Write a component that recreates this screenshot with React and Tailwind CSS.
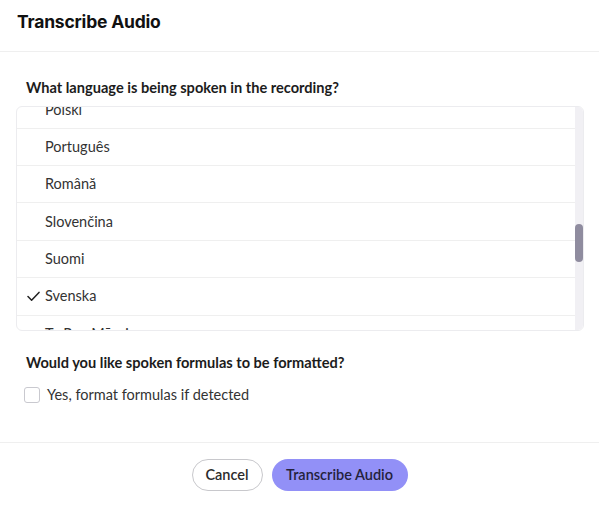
import { useState } from 'react'

const languages = [
  'Bahasa Indonesia', 'Bahasa Melayu', 'Català', 'Čeština', 'Dansk', 'Deutsch', 'English', 'Español',
  'Français', 'Hrvatski', 'Italiano', 'Latviešu', 'Lietuvių', 'Magyar', 'Nederlands', 'Norsk',
  'Polski', 'Português', 'Română', 'Slovenčina', 'Suomi', 'Svenska', 'Te Reo Māori', 'Tiếng Việt',
  'Türkçe', 'Ελληνικά', 'Български', 'Русский', 'Српски', 'Українська', 'עברית', 'العربية',
]

const ROW = 37.4
const START = languages.indexOf('Polski')

export default function App() {
  const [selected, setSelected] = useState('Svenska')
  const [formulas, setFormulas] = useState(false)

  const visible = languages.slice(START, START + 7)

  return (
    <div className="w-[599px] h-[505px] bg-white flex flex-col text-[#2b2b2b]" style={{ fontFamily: 'Lato, "Open Sans", sans-serif' }}>
      {/* Header */}
      <div className="h-[52px] border-b border-[#efefef] flex items-center px-[17px] pb-[7px] shrink-0">
        <h1 className="text-[17.5px] font-bold tracking-[-0.2px] text-[#111]" style={{ fontFamily: 'Inter, sans-serif' }}>
          Transcribe Audio
        </h1>
      </div>

      {/* Body */}
      <div className="flex-1 flex flex-col">
        <p className="pl-[26px] pt-[27px] text-[14.6px] font-bold text-[#1c1c1c] leading-[18px]">
          What language is being spoken in the recording?
        </p>

        <div className="ml-[16px] mr-[15px] mt-[9px] h-[225px] border border-[#ececef] rounded-[6px] flex overflow-hidden">
          <div className="flex-1 overflow-hidden">
            <div className="-mt-[15.8px]">
              {visible.map((lang) => (
                <button
                  key={lang}
                  onClick={() => setSelected(lang)}
                  className="w-full flex items-center pl-[10px] border-b border-[#efefef] text-left text-[14.5px] text-[#333]"
                  style={{ height: ROW }}>
                  <span className="w-[18px] shrink-0 flex items-center">
                    {selected === lang && (
                      <svg width="13" height="11" viewBox="0 0 13 11" fill="none">
                        <path d="M1 5.6 L4.6 9.3 L12 1.4" stroke="#222" strokeWidth="1.5" strokeLinecap="round" strokeLinejoin="round" />
                      </svg>
                    )}
                  </span>
                  {lang}
                </button>
              ))}
            </div>
          </div>
          {/* Scrollbar */}
          <div className="w-[8px] bg-[#f1f0f4] shrink-0">
            <div className="mt-[117px] h-[38px] rounded-full bg-[#8f8c9f]" />
          </div>
        </div>

        <p className="pl-[26px] pt-[23px] text-[14.6px] font-bold text-[#1c1c1c] leading-[18px]">
          Would you like spoken formulas to be formatted?
        </p>

        <label className="flex items-center pl-[24px] mt-[12px] gap-[7px] cursor-pointer">
          <span
            onClick={() => setFormulas(!formulas)}
            className="w-[16px] h-[16px] rounded-[3px] border border-[#c9c9cf] bg-white" />
          <span className="text-[14.5px] text-[#333]">Yes, format formulas if detected</span>
        </label>
      </div>

      {/* Footer */}
      <div className="h-[63px] border-t border-[#efefef] flex items-start justify-center gap-[9px] pt-[16px] shrink-0">
        <button className="h-[32px] w-[71px] rounded-full border border-[#c8c8cc] text-[14.5px] font-semibold text-[#2b2b2b]">
          Cancel
        </button>
        <button className="h-[32px] w-[136px] rounded-full bg-[#9290f7] text-[14.5px] font-semibold text-[#24223c]">
          Transcribe Audio
        </button>
      </div>
    </div>
  )
}
